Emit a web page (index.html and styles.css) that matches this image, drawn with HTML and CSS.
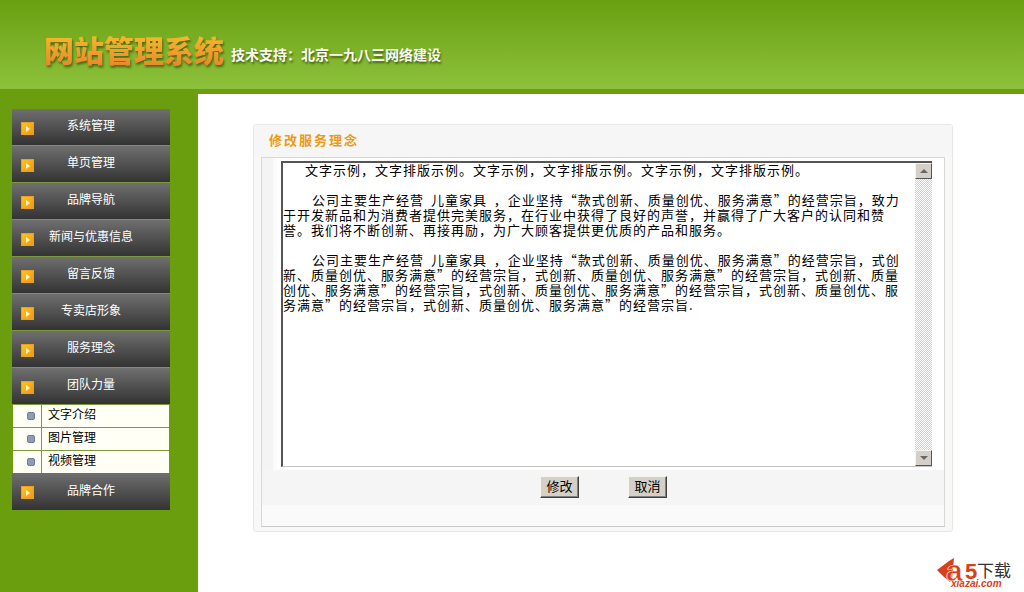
FILE: index.html

```html
<!DOCTYPE html>
<html>
<head>
    <meta charset="UTF-8">
    <title>网站管理系统</title>
    <link rel="stylesheet" href="styles.css">
</head>
<body>
<div class="header">
    <h1 class="logo">网站管理系统</h1>
    <span class="support">技术支持：北京一九八三网络建设</span>
</div>
<div class="wrap">
    <div class="side">
        <div class="menu"><i class="arrow"></i><span>系统管理</span></div>
        <div class="menu"><i class="arrow"></i><span>单页管理</span></div>
        <div class="menu"><i class="arrow"></i><span>品牌导航</span></div>
        <div class="menu"><i class="arrow"></i><span>新闻与优惠信息</span></div>
        <div class="menu"><i class="arrow"></i><span>留言反馈</span></div>
        <div class="menu"><i class="arrow"></i><span>专卖店形象</span></div>
        <div class="menu"><i class="arrow"></i><span>服务理念</span></div>
        <div class="menu"><i class="arrow"></i><span>团队力量</span></div>
        <ul class="sub">
            <li><b class="dot"></b><span>文字介绍</span></li>
            <li><b class="dot"></b><span>图片管理</span></li>
            <li><b class="dot"></b><span>视频管理</span></li>
        </ul>
        <div class="menu last"><i class="arrow"></i><span>品牌合作</span></div>
    </div>
    <div class="main">
        <div class="panel">
            <div class="panel-title">修改服务理念</div>
            <div class="panel-body">
                <div class="edit-row">
                    <div class="editor">
                        <div class="text">
                            <p class="line first">文字示例，文字排版示例。文字示例，文字排版示例。文字示例，文字排版示例。</p>
                            <p class="line blank"></p>
                            <p class="line second">公司主要生产经营 儿童家具 ，企业坚持“款式创新、质量创优、服务满意”的经营宗旨，致力</p>
                            <p class="line">于开发新品和为消费者提供完美服务，在行业中获得了良好的声誉，并赢得了广大客户的认同和赞</p>
                            <p class="line">誉。我们将不断创新、再接再励，为广大顾客提供更优质的产品和服务。</p>
                            <p class="line blank"></p>
                            <p class="line second">公司主要生产经营 儿童家具 ，企业坚持“款式创新、质量创优、服务满意”的经营宗旨，式创</p>
                            <p class="line">新、质量创优、服务满意”的经营宗旨，式创新、质量创优、服务满意”的经营宗旨，式创新、质量</p>
                            <p class="line">创优、服务满意”的经营宗旨，式创新、质量创优、服务满意”的经营宗旨，式创新、质量创优、服</p>
                            <p class="line">务满意”的经营宗旨，式创新、质量创优、服务满意”的经营宗旨.</p>
                        </div>
                        <div class="scroll">
                            <div class="scroll-btn"><i class="up"></i></div>
                            <div class="scroll-track"></div>
                            <div class="scroll-btn"><i class="down"></i></div>
                        </div>
                    </div>
                </div>
                <div class="btn-row">
                    <button class="btn">修改</button>
                    <button class="btn">取消</button>
                </div>
                <div class="panel-foot"></div>
            </div>
        </div>
    </div>
</div>
<div class="a5">
    <svg width="44" height="36" viewBox="0 0 44 36">
        <path d="M1 16 L13 7 L18 4 L16 25 L14 28 L8 23 Z" fill="#d8401c"/>
        <text class="a5-mark" x="10" y="27">a</text>
        <text class="a5-mark a5-five" x="29" y="25">5</text>
    </svg>
    <span class="a5-cn">下载</span>
    <span class="a5-en">xiazai.com</span>
</div>
</body>
</html>
```

FILE: styles.css

```css
* {
    box-sizing: border-box;
}
html, body {
    margin: 0;
    padding: 0;
    height: 592px;
    overflow: hidden;
    background: #fff;
    font-family: "Noto Sans CJK SC", "Liberation Sans", sans-serif;
}
ul, li, p, h1 {
    margin: 0;
    padding: 0;
}
li {
    list-style: none;
}

/* header */
.header {
    height: 94px;
    border-bottom: 5px solid #6a9e10;
    background: linear-gradient(#69a010, #8dc13c);
    display: flex;
    align-items: flex-start;
    padding: 31px 0 0 44px;
}
.logo {
    font-size: 30px;
    line-height: 36px;
    font-weight: 900;
    background: linear-gradient(#f7c02c, #e8862a);
    -webkit-background-clip: text;
    background-clip: text;
    color: transparent;
    filter: drop-shadow(1px 2px 1px rgba(50, 70, 10, .7));
}
.support {
    margin: 12px 0 0 7px;
    font-size: 14px;
    line-height: 22px;
    font-weight: 700;
    color: #fbfbf2;
    text-shadow: 1px 2px 2px rgba(40, 60, 10, .7);
}

/* left menu */
.wrap {
    display: flex;
    height: 498px;
}
.side {
    flex: 0 0 198px;
    background: #6a9e0f;
    padding: 15px 28px 0 12px;
}
.menu {
    height: 37px;
    display: grid;
    grid-template-columns: 1fr auto 1fr;
    background: linear-gradient(#6f6f6f, #333);
    border-bottom: 1px solid #7c9a3c;
    color: #fff;
    font-size: 12px;
    line-height: 31px;
}
.menu span {
    grid-column: 2;
    grid-row: 1;
}
.menu.last {
    border-bottom: 0;
    line-height: 33px;
}
.arrow {
    grid-column: 1;
    grid-row: 1;
    justify-self: start;
    width: 13px;
    height: 13px;
    margin: 13px 0 0 9px;
    background: linear-gradient(135deg, #ffc21e, #f09a12);
    border: 1px solid #e8a020;
    display: flex;
    align-items: center;
    justify-content: center;
}
.arrow::after {
    content: "";
    border-left: 4px solid #fff6c8;
    border-top: 3px solid transparent;
    border-bottom: 3px solid transparent;
}
.sub {
    padding: 0 1px;
    margin-top: -1px;
}
.sub li {
    height: 23px;
    display: flex;
    background: #fffff6;
    border-top: 1px solid #7c9a3c;
    font-size: 12px;
    line-height: 18px;
    color: #000;
}
.dot {
    width: 29px;
    border-right: 1px solid #7c9a3c;
    display: flex;
    align-items: center;
    justify-content: flex-end;
    padding-right: 6px;
}
.dot::after {
    content: "";
    width: 6px;
    height: 6px;
    border-radius: 2px;
    background: #8e9cb8;
    border: 1px solid #6f7d94;
}
.sub span {
    margin-left: 6px;
}

/* content */
.main {
    flex: 1;
    padding: 30px 71px 0 55px;
}
.panel {
    height: 408px;
    border: 1px solid #e6e6e2;
    border-radius: 3px;
    background: #f8f8f8;
    padding: 0 7px 5px;
}
.panel-title {
    height: 32px;
    margin: 0 -7px;
    padding-left: 15px;
    color: #ee9a12;
    font-size: 13px;
    font-weight: 700;
    letter-spacing: 2px;
    line-height: 29px;
    background: #f6f6f6;
}
.panel-body {
    height: 370px;
    border: 1px solid #d8d8d4;
    border-bottom-color: #c8c8c4;
    background: #fff;
    display: flex;
    flex-direction: column;
}
.edit-row {
    height: 312px;
    padding: 3px 12px 0 19px;
    background: linear-gradient(90deg, #f4f4f4 0, #f4f4f4 11px, #fafafa 11px, #fff 19px);
}
.editor {
    height: 306px;
    display: flex;
    justify-content: space-between;
    background: #fff;
    border: 2px solid #555;
    border-right: 0;
    border-bottom: 1px solid #c4c4c0;
}
.text {
    margin-top: -1px;
    font-size: 13px;
    letter-spacing: 1px;
    word-spacing: 3px;
    color: #000;
}
.line {
    height: 15px;
    line-height: 15px;
    white-space: nowrap;
}
.first {
    padding-left: 22px;
}
.second {
    padding-left: 29px;
}
.scroll {
    width: 17px;
    display: flex;
    flex-direction: column;
}
.scroll-btn {
    height: 16px;
    background: #d4d0c8;
    border: 1px solid;
    border-color: #f4f4f0 #555 #555 #f4f4f0;
    display: flex;
    align-items: center;
    justify-content: center;
}
.scroll-track {
    flex: 1;
    background: repeating-conic-gradient(#d4d0c8 0 25%, #fff 0 50%) 0 0 / 2px 2px;
}
.up, .down {
    border-left: 4px solid transparent;
    border-right: 4px solid transparent;
}
.up {
    border-bottom: 4px solid #666;
}
.down {
    border-top: 4px solid #666;
}
.btn-row {
    height: 35px;
    background: #f5f5f5;
    display: flex;
    align-items: center;
    padding: 0 0 2px 278px;
    gap: 49px;
}
.btn {
    width: 39px;
    height: 22px;
    padding: 0 0 2px;
    background: #d4d0c8;
    border: 1px solid;
    border-color: #f4f4f0 #404040 #404040 #f4f4f0;
    box-shadow: inset -1px -1px 0 #808080;
    color: #000;
    font-family: "Noto Sans CJK SC", sans-serif;
    font-size: 13px;
    line-height: 18px;
}
.panel-foot {
    flex: 1;
    background: #fafafa;
}

/* a5 watermark */
.a5 {
    position: absolute;
    left: 936px;
    top: 554px;
    width: 78px;
    height: 36px;
}
.a5 svg {
    position: absolute;
    left: 0;
    top: 0;
}
.a5-mark {
    font-family: "Liberation Sans", sans-serif;
    font-size: 30px;
    font-weight: 700;
    fill: #d8401c;
    stroke: #fff;
    stroke-width: .6px;
}
.a5-five {
    font-size: 22px;
    stroke: none;
}
.a5-cn {
    position: absolute;
    left: 41px;
    top: 6px;
    font-size: 17px;
    line-height: 20px;
    color: #333;
}
.a5-en {
    position: absolute;
    left: 15px;
    top: 26px;
    font-family: "Liberation Sans", sans-serif;
    font-size: 10px;
    line-height: 8px;
    font-weight: 700;
    font-style: italic;
    color: #d8401c;
}
```
